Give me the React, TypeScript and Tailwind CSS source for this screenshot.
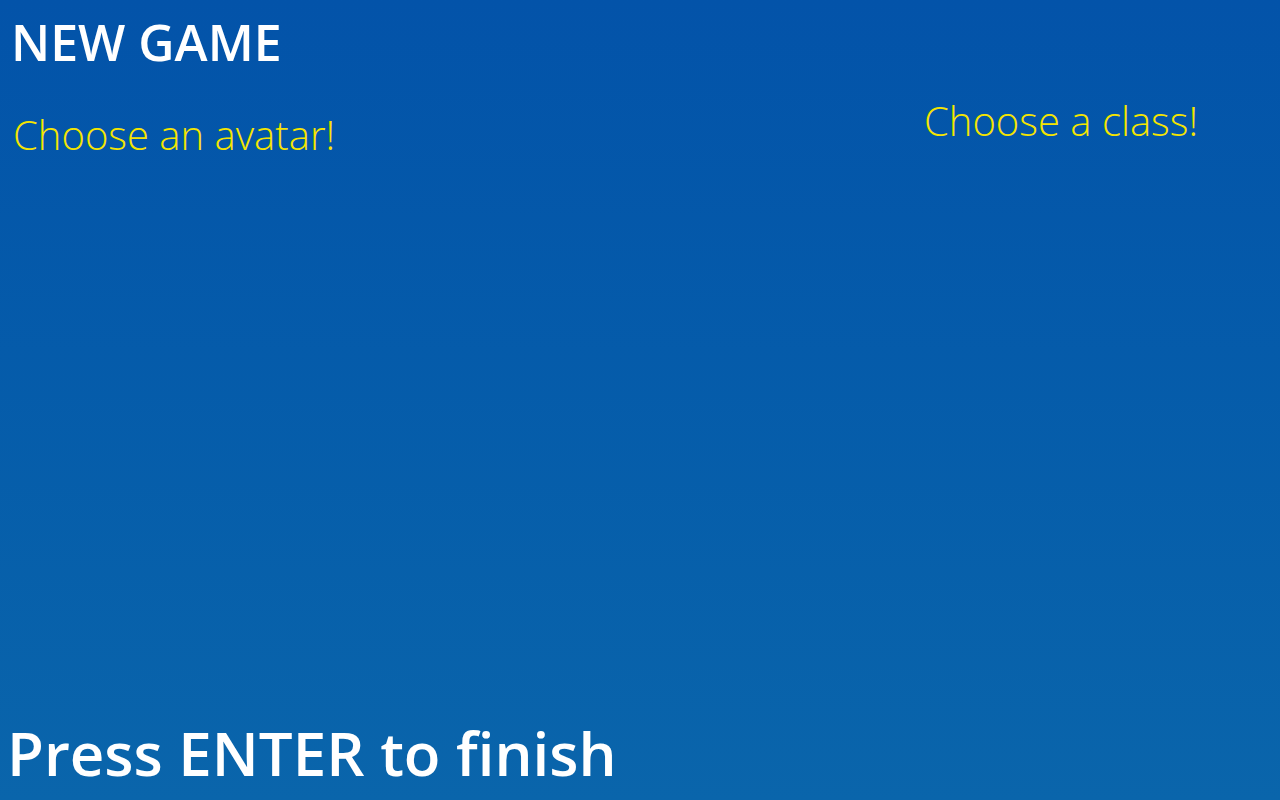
import React from 'react';

const App: React.FC = () => {
  return (
    <div
      className="flex h-[800px] w-[1280px] flex-col overflow-hidden bg-gradient-to-b from-[#0353a9] to-[#0a65ab] text-white"
      style={{ fontFamily: '"Open Sans", "Noto Sans", sans-serif' }}
    >
      {/* Title */}
      <h1 className="pl-[11px] pt-[12px] text-[50px] font-semibold leading-[60px]">NEW GAME</h1>

      {/* Pickers */}
      <div className="flex flex-1 items-start justify-between pr-[82px]">
        <div className="pl-[13px] pt-[36px]">
          <p className="text-[40px] font-light leading-[54px] text-[#f5e500]">Choose an avatar!</p>
        </div>
        <div className="pt-[22px]">
          <p className="text-[40px] font-light leading-[54px] text-[#f5e500]">Choose a class!</p>
        </div>
      </div>

      {/* Footer */}
      <p className="pb-[7px] pl-[7px] text-[60px] font-semibold leading-[80px]">Press ENTER to finish</p>
    </div>
  );
};

export default App;
